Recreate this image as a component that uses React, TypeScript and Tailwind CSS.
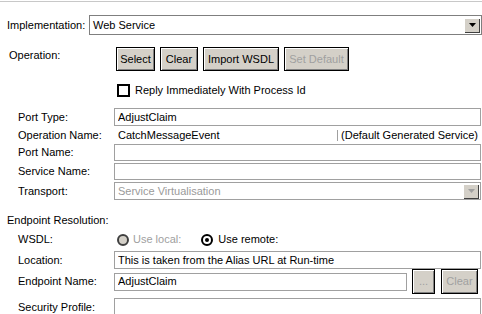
import type { ReactNode } from 'react';

// Classic XP-style web service implementation panel

function Btn({ children, disabled, className = '' }: { children: ReactNode; disabled?: boolean; className?: string }) {
  return (
    <div
      className={`flex h-full items-center justify-center border border-black bg-[#d4d0c8] shadow-[inset_1px_1px_0_#ffffff,inset_-1px_-1px_0_#808080] ${
        disabled ? 'text-[#a0a0a0]' : 'text-black'
      } ${className}`}
    >
      {children}
    </div>
  );
}

function Arrow({ disabled }: { disabled?: boolean }) {
  return (
    <div className="flex h-[15px] w-[16px] items-center justify-center bg-[#d4d0c8] shadow-[inset_1px_1px_0_#ffffff,inset_-1px_-1px_0_#404040]">
      <svg width="7" height="4" viewBox="0 0 7 4">
        <path d="M0 0h7L3.5 4z" fill={disabled ? '#a0a0a0' : '#000000'} />
      </svg>
    </div>
  );
}

function Field({ children, muted, select }: { children?: ReactNode; muted?: boolean; select?: boolean }) {
  return (
    <div
      className={`flex h-full min-w-0 flex-1 items-center border border-[#a0a0a0] bg-white pl-[3px] pr-[1px] ${
        muted ? 'text-[#9a9a9a]' : 'text-black'
      }`}
    >
      <span className="flex-1 truncate">{children}</span>
      {select && <Arrow disabled={muted} />}
    </div>
  );
}

function Row({ label, h, mt = '', children }: { label: string; h: string; mt?: string; children: ReactNode }) {
  return (
    <div className={`flex items-center pl-[18px] ${h} ${mt}`}>
      <div className="w-[96px] shrink-0">{label}</div>
      <div className="flex h-full flex-1 items-center">{children}</div>
    </div>
  );
}

export default function App() {
  return (
    <div className="h-[314px] w-[482px] overflow-hidden bg-white text-[11px] leading-[13px] text-black [font-family:'Liberation_Sans',Arial,sans-serif]">
      <div className="mt-[1px] h-px bg-[#c8c8c8]" />

      <div className="mt-[13px] flex h-[20px] items-center pl-[7px]">
        <div className="w-[82px] shrink-0">Implementation:</div>
        <div className="flex h-full flex-1 items-center border border-[#7f7f7f] bg-white pl-[3px] pr-[1px]">
          <span className="flex-1">Web Service</span>
          <Arrow />
        </div>
      </div>

      <div className="mt-[12px] flex h-[24px] items-start pl-[9px]">
        <div className="w-[107px] shrink-0 pt-[2px]">Operation:</div>
        <div className="flex h-full gap-[5px]">
          <Btn className="w-[39px]">Select</Btn>
          <Btn className="w-[38px]">Clear</Btn>
          <Btn className="w-[76px]">Import WSDL</Btn>
          <Btn disabled className="w-[65px]">Set Default</Btn>
        </div>
      </div>

      <div className="mt-[13px] flex h-[13px] items-center pl-[117px]">
        <div className="h-[13px] w-[13px] border-2 border-black bg-white" />
        <span className="ml-[5px]">Reply Immediately With Process Id</span>
      </div>

      <div className="mt-[11px] flex flex-col pr-px">
        <Row label="Port Type:" h="h-[18px]">
          <Field>AdjustClaim</Field>
        </Row>
        <Row label="Operation Name:" h="h-[18px]">
          <div className="flex w-full items-center pl-[4px]">
            <span className="flex-1">CatchMessageEvent</span>
            <span className="mr-[3px] h-[11px] w-px bg-[#a0a0a0]" />
            <span className="pr-[3px]">(Default Generated Service)</span>
          </div>
        </Row>
        <Row label="Port Name:" h="h-[17px]">
          <Field />
        </Row>
        <Row label="Service Name:" h="h-[17px]" mt="mt-[2px]">
          <Field />
        </Row>
        <Row label="Transport:" h="h-[18px]" mt="mt-[2px]">
          <Field muted select>
            Service Virtualisation
          </Field>
        </Row>
      </div>

      <div className="mt-[14px] pl-[7px]">Endpoint Resolution:</div>

      <div className="mt-[6px] flex flex-col pr-px">
        <Row label="WSDL:" h="h-[13px]">
          <div className="flex items-center pl-[3px]">
            <span className="h-[12px] w-[12px] rounded-full border-2 border-[#404040] bg-[#d4d0c8]" />
            <span className="ml-[4px] text-[#a0a0a0]">Use local:</span>
            <span className="ml-[20px] flex h-[12px] w-[12px] items-center justify-center rounded-full border-2 border-black bg-white">
              <span className="h-[4px] w-[4px] rounded-full bg-black" />
            </span>
            <span className="ml-[5px]">Use remote:</span>
          </div>
        </Row>
        <Row label="Location:" h="h-[18px]" mt="mt-[5px]">
          <Field>This is taken from the Alias URL at Run-time</Field>
        </Row>
        <Row label="Endpoint Name:" h="h-[25px]">
          <div className="flex h-[18px] flex-1">
            <Field>AdjustClaim</Field>
          </div>
          <div className="ml-[5px] h-full w-[23px]">
            <Btn disabled>...</Btn>
          </div>
          <div className="ml-[6px] mr-[3px] h-full w-[37px]">
            <Btn disabled>Clear</Btn>
          </div>
        </Row>
        <Row label="Security Profile:" h="h-[18px]" mt="mt-[4px]">
          <Field />
        </Row>
      </div>
    </div>
  );
}
